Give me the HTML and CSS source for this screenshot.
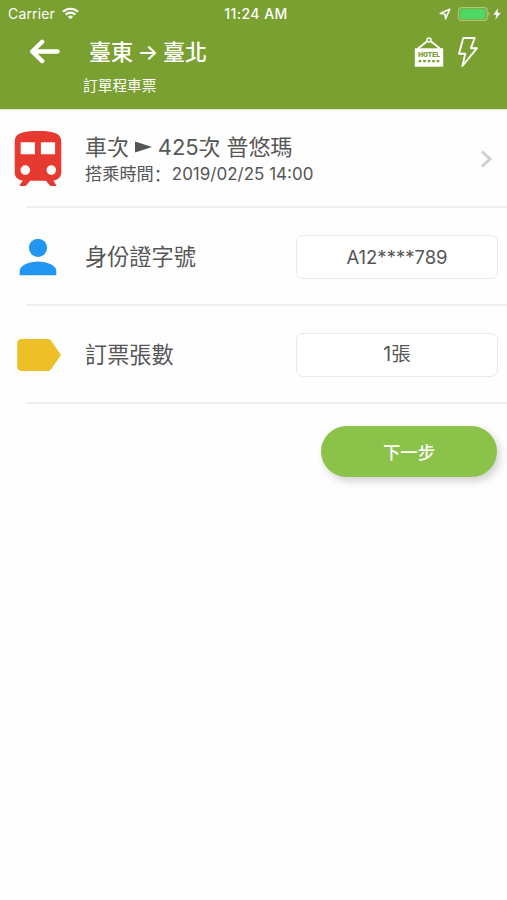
FILE: index.html
```html
<!DOCTYPE html>
<html lang="zh-Hant">
<head>
<meta charset="utf-8">
<title>訂單程車票</title>
<link rel="stylesheet" href="styles.css">
</head>
<body>
<header class="header">
  <div class="status">
    <div class="carrier">
      <span>Carrier</span>
      <svg class="wifi" width="17" height="13" viewBox="0 0 17 13" fill="none" stroke="#fff" stroke-width="2.2"><path d="M1 4.8a10.700 10.700 0 0 1 15 0M3.700 7.600a6.800 6.800 0 0 1 9.600 0"/><path d="M8.500 12.300 5.900 9.800a3.700 3.700 0 0 1 5.200 0z" fill="#fff" stroke="none"/></svg>
    </div>
    <time class="clock">11:24 AM</time>
    <div class="power">
      <svg width="12" height="12" viewBox="0 0 12 12" fill="none" stroke="#fff" stroke-width="1.5" stroke-linejoin="round"><path d="M10.700 1.200 1.200 5.400l4.800.7.6 4.800z"/></svg>
      <svg width="33" height="14" viewBox="0 0 33 14"><rect x=".6" y=".6" width="28.500" height="12.800" rx="2.800" fill="none" stroke="#b0c77f" stroke-width="1.2"/><rect x="2.200" y="2.100" width="25.200" height="9.800" rx="1.400" fill="#4cd964"/><path d="M30.400 4.800q2.800 2.200 0 4.400z" fill="#b0c77f"/></svg>
      <svg class="charge" width="8" height="12" viewBox="0 0 8 12" fill="#fff"><path d="M5.100.2.3 6.800h3.100L2.300 11.800l5.400-7H4.400z"/></svg>
    </div>
  </div>
  <div class="bar">
    <svg class="back" width="32" height="26" viewBox="0 0 32 26" fill="none" stroke="#fff" stroke-width="4.3" stroke-linecap="round" stroke-linejoin="round"><path d="M13.200 2.800 3.200 12.500l10 9.600M3.700 12.500h24.900"/></svg>
    <h1 class="route"><span>臺東</span><span class="to">→</span><span>臺北</span></h1>
    <svg class="hotel" width="30" height="32" viewBox="0 0 30 32">
      <path d="M3.500 13 12.800 5.500m4.400 0 9.300 7.500" fill="none" stroke="#fff" stroke-width="1.800"/>
      <circle cx="15" cy="4" r="2" fill="none" stroke="#fff" stroke-width="1.500"/>
      <path d="M.8 12.300h28.400v18.400H.8z" fill="#fff"/>
      <text class="sign" x="4.200" y="21.200" textLength="21.600" lengthAdjust="spacingAndGlyphs">HOTEL</text>
      <path d="M4.700 25.200h20.800" fill="none" stroke="#779f32" stroke-width="2.200" stroke-dasharray="2.600 1.900"/>
    </svg>
    <svg class="flash" width="22" height="32" viewBox="0 0 22 32" fill="none" stroke="#fff" stroke-width="1.900" stroke-linejoin="round"><path d="M6.300 2h11.400l-3.800 10.200H20L5.400 30l2.800-12.200H2z"/></svg>
  </div>
  <p class="subtitle">訂單程車票</p>
</header>
<main>
  <section class="row">
    <div class="icon">
      <svg width="48" height="58" viewBox="0 0 48 58"><path fill="#e63a30" fill-rule="evenodd" d="M24 1C8 1 .7 3.300.7 11.500v31c0 4.400 3.400 7.700 8 8L5.300 56h6.300l4.600-5.300h15.600l4.600 5.300h6.300l-3.400-5.500c4.600-.3 8-3.600 8-8v-31C47.300 3.300 40 1 24 1zM6.700 12.200h14.200v12H6.700zm20.200 0h14.200v12H26.900zM11.300 35.300a4.800 4.800 0 1 1 0 9.600 4.800 4.800 0 0 1 0-9.600zm26 0a4.800 4.800 0 1 1 0 9.600 4.800 4.800 0 0 1 0-9.600z"/></svg>
    </div>
    <div class="trip">
      <div class="train"><span>車次</span><svg width="17" height="12" viewBox="0 0 17 12"><path d="M0 .5 17 6 0 11.500z" fill="#555"/></svg><span>425次 普悠瑪</span></div>
      <div class="when">搭乘時間<span class="colon" lang="zh-Hans">：</span><span class="date">2019/02/25 14:00</span></div>
    </div>
    <svg class="chevron" width="14" height="20" viewBox="0 0 14 20" fill="none" stroke="#d0d0d0" stroke-width="3"><path d="m2 2.500 8 7.500-8 7.500"/></svg>
  </section>
  <section class="row">
    <div class="icon">
      <svg width="38" height="38" viewBox="0 0 38 38" fill="#2196f3"><circle cx="19" cy="9.800" r="9.100"/><path d="M.7 37.200v-4.500c0-6 12-9.100 18.300-9.100s18.300 3.100 18.300 9.100v4.500z"/></svg>
    </div>
    <h2 class="label">身份證字號</h2>
    <div class="field">A12****789</div>
  </section>
  <section class="row">
    <div class="icon tag">
      <svg width="46" height="34" viewBox="0 0 46 34"><path fill="#edc027" d="M5.800 1h25.400c1.900 0 3.100.6 4.100 2L45 17l-9.700 14c-1 1.400-2.200 2-4.100 2H5.800c-3 0-4.600-1.600-4.600-4.600V5.600C1.200 2.600 2.800 1 5.800 1z"/></svg>
    </div>
    <h2 class="label">訂票張數</h2>
    <div class="field count">1張</div>
  </section>
  <div class="actions"><button class="next" type="button">下一步</button></div>
</main>
</body>
</html>
```
FILE: styles.css
```css
* { box-sizing: border-box; }
body {
  margin: 0;
  min-height: 900px;
  background: #fefefe;
  color: #565656;
  font-family: Inter, "Noto Sans CJK TC", sans-serif;
}
svg { display: block; flex: none; }
.header {
  height: 110px;
  border-bottom: 1px solid #dfe8cf;
  background: #7aa032;
  color: #fff;
  overflow: hidden;
}
.status {
  display: grid;
  grid-template-columns: 1fr auto 1fr;
  align-items: center;
  height: 27px;
  padding: 0 6px 0 8px;
  font-size: 14px;
  line-height: 27px;
}
.carrier, .power { display: flex; align-items: center; }
.carrier { gap: 7px; letter-spacing: 0.15px; }
.clock { font-weight: 500; font-size: 14px; letter-spacing: 0.45px; padding-left: 3px; }
.power { justify-content: flex-end; gap: 7px; }
.charge { margin-left: -5px; }
.bar {
  display: flex;
  align-items: center;
  height: 49px;
  padding: 0 28px 0 29px;
}
.route {
  display: flex;
  align-items: center;
  flex: 1;
  margin: 0 0 0 28px;
  font-size: 22px;
  line-height: 32px;
  font-weight: 500;
}
.to { width: 30px; text-align: center; font-size: 22px; }
.hotel { margin-right: 13px; }
.sign { font: 900 6.5px Inter, sans-serif; fill: #779f32; }
.subtitle {
  margin: 0 0 0 83px;
  font-size: 14.7px;
  line-height: 20px;
}
.row {
  position: relative;
  display: flex;
  align-items: center;
  height: 98px;
  padding-right: 9px;
}
.row::after {
  content: "";
  position: absolute;
  left: 26px;
  right: 0;
  bottom: 0;
  height: 2px;
  background: #efefef;
}
.icon {
  display: flex;
  justify-content: center;
  width: 76px;
  margin-right: 9px;
}
.icon.tag { width: 77px; margin-right: 8px; }
.trip { flex: 1; padding-top: 1px; }
.chevron { margin-right: 4px; }
.train {
  display: flex;
  align-items: center;
  gap: 6px;
  font-size: 22px;
  line-height: 28px;
  letter-spacing: -0.1px;
}
.when { display: flex; font-size: 17.2px; line-height: 26px; }
.colon { width: 18px; font-family: "Noto Sans CJK SC", sans-serif; }
.date { font-size: 17px; }
.label {
  flex: 1;
  margin: 0;
  font-size: 22.2px;
  line-height: 32px;
  font-weight: 400;
}
.field {
  width: 202px;
  height: 44px;
  border: 1px solid #e9e9e9;
  border-radius: 7px;
  background: #fff;
  font-size: 18.5px;
  line-height: 42px;
  text-align: center;
}
.count { font-size: 19.5px; line-height: 40px; }
.actions {
  display: flex;
  justify-content: flex-end;
  padding: 22px 10px 0 0;
}
.next {
  width: 176px;
  height: 51px;
  border: 0;
  border-radius: 26px;
  background: #8bc34a;
  box-shadow: 3px 4px 8px rgba(0, 0, 0, 0.18);
  color: #fff;
  font: 500 17.4px/51px Inter, "Noto Sans CJK TC", sans-serif;
}
```
